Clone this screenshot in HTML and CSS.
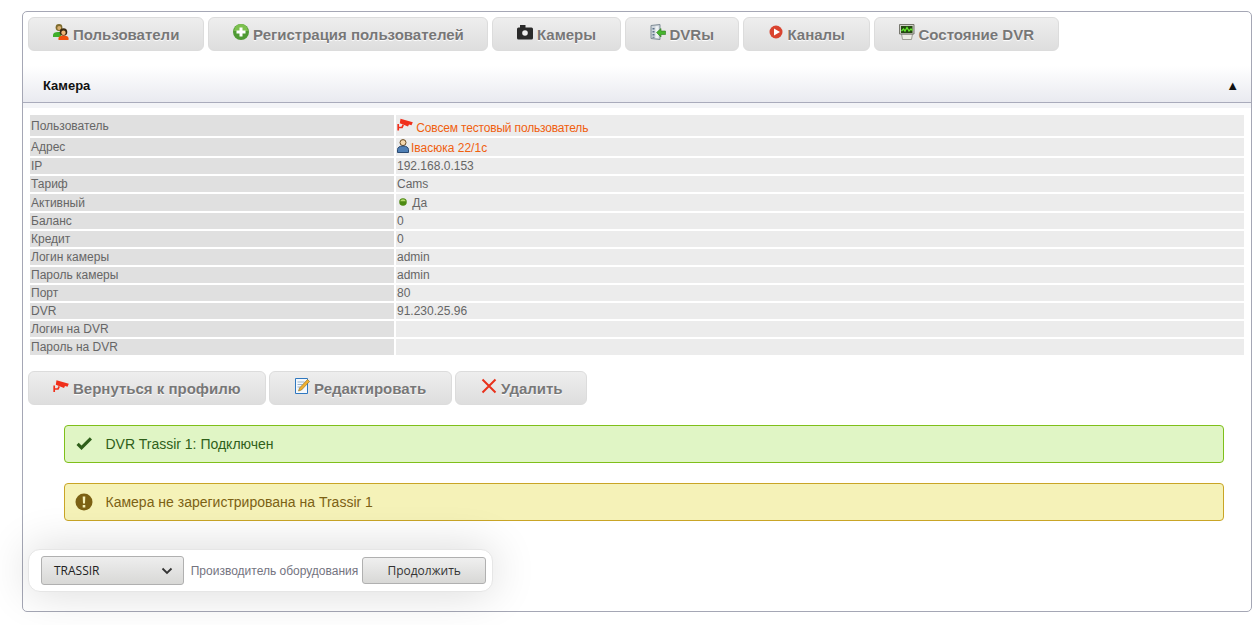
FILE: index.html
```html
<!DOCTYPE html>
<html lang="ru">
<head>
<meta charset="utf-8">
<title>Камера</title>
<link rel="stylesheet" href="styles.css">
</head>
<body>
<main class="panel">
  <nav class="tabs">
    <a class="btn w-users"><svg class="ico" viewBox="0 0 16 16"><circle cx="6" cy="3.500" r="3.400" fill="#7d6a2c"/><circle cx="6.200" cy="4" r="2" fill="#d9b070"/><path d="M0 13v-2C0 9 2 8 5 8h3v5z" fill="#3fae2a"/><circle cx="10.500" cy="8" r="3.800" fill="#3a2a12"/><circle cx="10.500" cy="8.800" r="2.200" fill="#f0b878"/><path d="M5.500 16v-1.800c0-1.700 2-2.700 5-2.700s5 1 5 2.700V16z" fill="#f0500c"/></svg>Пользователи</a>
    <a class="btn w-reg"><svg class="ico" viewBox="0 0 16 16"><circle cx="8" cy="8" r="8" fill="#4f9a34"/><path d="M1 7a7 7 0 0 1 14 0z" fill="#7cc04e"/><path d="M6.500 3.500h3v3h3v3h-3v3h-3v-3h-3v-3h3z" fill="#fff"/></svg>Регистрация пользователей</a>
    <a class="btn w-cam"><svg class="ico" viewBox="0 0 16 16"><path d="M1.500 3.500H3V1h5.500v2.500h6A1.500 1.500 0 0 1 16 5v9a1.500 1.500 0 0 1-1.500 1.500h-13A1.500 1.500 0 0 1 0 14V5a1.500 1.500 0 0 1 1.500-1.500z" fill="#2a2a2a"/><circle cx="8" cy="9" r="2.800" fill="#eeeeee"/></svg>Камеры</a>
    <a class="btn w-dvr"><svg class="ico" viewBox="0 0 16 16"><path d="M1 1.500L10 .5v15l-9-1z" fill="#cfd6dc" stroke="#7f8c96"/><path d="M2.500 4h2v1.500h-2zM2.500 7h2v1.500h-2zM2.500 10h2v1.500h-2zM2.500 12.800h2v1h-2z" fill="#5a7088"/><path d="M5.500 2.200h3v11.800h-3z" fill="#eef2f4"/><path d="M6.500 8.500L11 4.500v2.500h4.500v3.500H11V13z" fill="#46b52e" stroke="#2b7a1c" stroke-width=".6"/></svg>DVRы</a>
    <a class="btn w-chan"><svg class="ico" viewBox="0 0 16 16"><circle cx="8" cy="8" r="6.500" fill="#d9432f"/><path d="M6 4.500L12 8 6 11.500z" fill="#fff"/></svg>Каналы</a>
    <a class="btn w-state"><svg class="ico" viewBox="0 0 16 16"><path d="M2.500 10h11l-1 5.500h-9z" fill="#ecece4" stroke="#8a8a80" stroke-width=".8"/><path d="M.5 .5h14.500v9.500H.5z" fill="#cfcfc6" stroke="#77776e"/><path d="M2 2h11.500v7H2z" fill="#23480f"/><path d="M2.500 7l2-2 1.500 2 2-3.500L10 7l2-2 1.500 1.500" fill="none" stroke="#63e82e" stroke-width="1.300"/></svg>Состояние DVR</a>
  </nav>

  <header class="bar">
    <h2 class="bar-title">Камера</h2>
    <span class="bar-arrow">▲</span>
  </header>
  <div class="bar-gap"></div>

  <table class="info">
    <tr class="r-user"><th>Пользователь</th><td><svg class="ico-cam" viewBox="0 0 16 13"><path d="M3.500 .8L15.800 4.300 14.500 7.300 12 6.500 11 8.500 2.800 5.200z" fill="#f0301c"/><path d="M1.200 6v6.500M1.200 9.500H5L6.200 6.800" fill="none" stroke="#f0301c" stroke-width="1.700"/></svg> <a class="link link-user">Совсем тестовый пользователь</a></td></tr>
    <tr class="r-addr"><th>Адрес</th><td><svg class="ico-person" viewBox="0 0 12 14"><circle cx="6" cy="3.600" r="3" fill="#f4d8ae" stroke="#6a4a20"/><path d="M.5 13.500v-3C.5 8.500 2.500 7 6 7s5.500 1.500 5.500 3.500v3z" fill="#4f7fb5" stroke="#2a4a72"/></svg><a class="link">Івасюка 22/1с</a></td></tr>
    <tr class="r-std"><th>IP</th><td>192.168.0.153</td></tr>
    <tr class="r-std"><th>Тариф</th><td>Cams</td></tr>
    <tr class="r-act"><th>Активный</th><td><svg class="ico-dot" viewBox="0 0 10 10"><circle cx="5" cy="5" r="4.700" fill="#4d8a12"/><path d="M1.500 4a3.600 3 0 0 1 7 0z" fill="#b2d86a"/></svg> Да</td></tr>
    <tr class="r-std"><th>Баланс</th><td>0</td></tr>
    <tr class="r-std"><th>Кредит</th><td>0</td></tr>
    <tr class="r-std"><th>Логин камеры</th><td>admin</td></tr>
    <tr class="r-std"><th>Пароль камеры</th><td>admin</td></tr>
    <tr class="r-std"><th>Порт</th><td>80</td></tr>
    <tr class="r-std"><th>DVR</th><td>91.230.25.96</td></tr>
    <tr class="r-std"><th>Логин на DVR</th><td></td></tr>
    <tr class="r-std"><th>Пароль на DVR</th><td></td></tr>
  </table>

  <div class="actions">
    <a class="btn w-back"><svg class="ico" viewBox="0 0 16 13"><path d="M3.500 .8L15.800 4.300 14.500 7.300 12 6.500 11 8.500 2.800 5.200z" fill="#f0301c"/><path d="M1.200 6v6.500M1.200 9.500H5L6.200 6.800" fill="none" stroke="#f0301c" stroke-width="1.700"/></svg>Вернуться к профилю</a>
    <a class="btn w-edit"><svg class="ico" viewBox="0 0 16 16"><path d="M1.500 .5h12v15h-12z" fill="#f4f8fc" stroke="#2f78c0"/><path d="M3.500 4h7M3.500 6.500h5M3.500 9h3" stroke="#9ab4cc"/><path d="M13.500 1.500l2 2-8 8.500-3 1 1-3z" fill="#f0b030" stroke="#8a6a20" stroke-width=".6"/></svg>Редактировать</a>
    <a class="btn w-del"><svg class="ico" viewBox="0 0 16 16"><path d="M1.500 1.500l13 13M14.500 1.500l-13 13" stroke="#e8321c" stroke-width="2" fill="none"/></svg>Удалить</a>
  </div>

  <div class="alert ok"><svg class="alert-ico" viewBox="0 0 18 18"><path d="M1.500 10l5 5L17 4.500 14.800 2.300 6.500 10.600 3.700 7.800z" fill="#2f5f1a"/></svg><span>DVR Trassir 1: Подключен</span></div>
  <div class="alert warn"><svg class="alert-ico" viewBox="0 0 18 18"><circle cx="9" cy="9" r="8.500" fill="#7c6114"/><path d="M7.700 3.500h2.600L10 10.500H8zM7.700 12h2.600v2.500H7.700z" fill="#f5f1b8"/></svg><span>Камера не зарегистрирована на Trassir 1</span></div>

  <form class="vendor">
    <div class="select"><span>TRASSIR</span><svg class="chev" viewBox="0 0 12 8"><path d="M1.500 1.500L6 6l4.500-4.500" fill="none" stroke="#333" stroke-width="1.800"/></svg></div>
    <span class="vendor-label">Производитель оборудования</span>
    <button class="go" type="button">Продолжить</button>
  </form>
</main>
</body>
</html>
```

FILE: styles.css
```css
* { box-sizing: border-box; }
html, body { margin: 0; padding: 0; background: #fff; }
body { font-family: "Liberation Sans", Arial, sans-serif; font-size: 12px; color: #666; height: 625px; overflow: hidden; }

.panel {
  margin: 11px 8px 0 22px;
  width: 1230px;
  height: 601px;
  border: 1px solid #a5a7b5;
  border-radius: 5px;
  background: #fff;
  padding-top: 5px;
}

.tabs { display: flex; gap: 4px; padding-left: 5px; height: 34px; }

.btn {
  display: flex;
  align-items: center;
  height: 34px;
  padding: 0 24px;
  border: 1px solid #dcdcdc;
  border-radius: 6px;
  background: linear-gradient(#eeeeee, #dedede);
  color: #777;
  font-size: 15px;
  font-weight: bold;
  text-shadow: 0 1px 1px #fff;
  white-space: nowrap;
}
.ico { width: 16px; height: 16px; margin-right: 4px; margin-top: -4px; flex: none; }

.w-users { width: 176px; }
.w-reg { width: 280px; }
.w-cam { width: 128.5px; }
.w-dvr { width: 114px; }
.w-chan { width: 127px; }
.w-state { width: 185px; }

.bar {
  display: flex;
  align-items: center;
  justify-content: space-between;
  height: 37px;
  margin-top: 15px;
  padding: 2px 12px 0 20px;
  background: linear-gradient(#ffffff, #e9eaf0);
  border-bottom: 1px solid #a9abbb;
}
.bar-title { margin: 0; font-size: 13px; font-weight: bold; color: #111; }
.bar-arrow { font-size: 13px; color: #111; }
.bar-gap { height: 5px; background: #f3f4f7; }

.info { margin: 5px 0 0 5px; width: 1218px; border-collapse: separate; border-spacing: 2px; table-layout: fixed; }
.info th, .info td { padding: 0 1px; font-weight: normal; text-align: left; font-size: 12px; line-height: 14px; color: #666; vertical-align: middle; }
.info th { width: 364px; background: #e0e0e0; }
.info td { background: #ececec; }
.r-user { height: 21px; }
.r-user td { padding-top: 2px; }
.r-addr { height: 18px; }
.r-std { height: 16px; }
.r-act { height: 17px; }
.link { color: #f0600f; }
.link-user { letter-spacing: -.17px; }
.ico-cam { width: 16px; height: 13px; vertical-align: 1px; }
.ico-person { width: 12px; height: 14px; vertical-align: -1px; margin-right: 2px; }
.ico-dot { width: 8px; height: 8px; margin: 0 2px; vertical-align: 1px; }

.actions { display: flex; gap: 3px; margin: 14px 0 0 5px; }
.w-back { width: 238px; }
.w-edit { width: 183px; }
.w-del { width: 132px; padding-left: 25px; }

.alert {
  display: flex;
  align-items: center;
  width: 1160px;
  height: 38px;
  margin: 20px 0 0 41px;
  padding: 0 0 0 10px;
  border: 1px solid;
  border-radius: 4px;
  font-size: 14px;
}
.alert-ico { width: 18px; height: 18px; margin-right: 12.5px; flex: none; }
.ok { background: #e0f5c5; border-color: #7fbf1a; color: #2f5f1a; }
.warn { background: #f5f2b8; border-color: #c9a526; color: #7c6114; }

.vendor {
  display: flex;
  align-items: center;
  width: 465px;
  height: 43px;
  margin: 28px 0 0 5px;
  padding: 0 6px 0 12px;
  background: #fff;
  border: 1px solid #e6e6e6;
  border-radius: 12px;
  box-shadow: 0 0 45px rgba(0, 0, 0, .16);
}
.select {
  display: flex;
  align-items: center;
  justify-content: space-between;
  width: 143px;
  height: 29px;
  padding: 0 10px 0 12px;
  border: 1px solid #b0b0b0;
  border-radius: 3px;
  background: linear-gradient(#eeeeee, #d8d8d6);
  color: #222;
  font-family: "Open Sans", sans-serif;
  font-size: 12px;
}
.chev { width: 12px; height: 8px; }
.vendor-label { margin-left: 7px; color: #74747f; font-size: 12px; white-space: nowrap; }
.go {
  width: 124px;
  height: 27px;
  margin-left: 4px;
  border: 1px solid #b0b0b0;
  border-radius: 3px;
  background: linear-gradient(#efefef, #d8d8d6);
  color: #333;
  font-family: "Open Sans", sans-serif;
  font-size: 12px;
  padding: 0;
}
```
